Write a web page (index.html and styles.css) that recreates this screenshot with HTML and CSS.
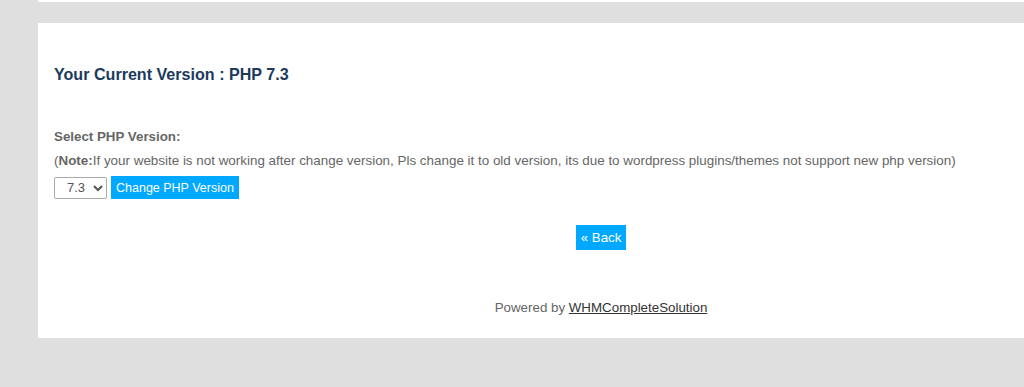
FILE: index.html
```html
<!DOCTYPE html>
<html>
<head>
<meta charset="utf-8">
<link rel="stylesheet" href="styles.css">
</head>
<body>
<div class="topstrip"></div>
<div class="panel">
  <h2 class="title">Your Current Version : PHP 7.3</h2>
  <form class="form">
    <div class="label">Select PHP Version:</div>
    <div class="note">(<b>Note:</b>If your website is not working after change version, Pls change it to old version, its due to wordpress plugins/themes not support new php version)</div>
    <div class="controls">
      <select class="select"><option>7.3</option></select>
      <button type="button" class="btn change">Change PHP Version</button>
    </div>
  </form>
  <div class="center back-row"><button type="button" class="btn back">« Back</button></div>
  <div class="center footer">Powered by <a href="#">WHMCompleteSolution</a></div>
</div>
</body>
</html>
```
FILE: styles.css
```css
html, body { margin: 0; padding: 0; }
body {
  background: #dfdfdf;
  font-family: "Liberation Sans", Arial, sans-serif;
  overflow: hidden;
  height: 387px;
}
.topstrip {
  margin-left: 38px;
  height: 2px;
  background: #fff;
}
.panel {
  margin-left: 38px;
  margin-top: 21px;
  height: 315px;
  background: #fff;
  padding: 0 16px;
  color: #666;
  font-size: 13.33px;
}
.title {
  margin: 0;
  padding-top: 41px;
  font-size: 16.1px;
  font-weight: bold;
  color: #1b3a5c;
  line-height: 20px;
}
.form { margin-top: 45px; }
.label { font-weight: bold; line-height: 16px; }
.note { margin-top: 8px; line-height: 16px; font-size: 13.42px; }
.note b { font-weight: bold; }
.controls {
  display: flex;
  align-items: center;
  gap: 4px;
  margin-top: 7px;
}
.select {
  width: 53px;
  height: 22px;
  font-family: "Liberation Sans", Arial, sans-serif;
  font-size: 13px;
  color: #555;
  border: 1px solid #aaa;
  border-radius: 2px;
  background: #fff;
  padding: 0 0 0 8px;
}
.btn {
  background: #00a8ff;
  color: #fff;
  border: none;
  font-family: "Liberation Sans", Arial, sans-serif;
  font-size: 13.33px;
  height: 23px;
}
.change { font-size: 12.5px; padding: 0 5px; }
.center { text-align: center; padding-left: 140px; }
.back-row { margin-top: 26px; }
.back { height: 25px; padding: 0 5px; }
.footer { margin-top: 50px; }
.footer a { color: #333; text-decoration: underline; }
```
